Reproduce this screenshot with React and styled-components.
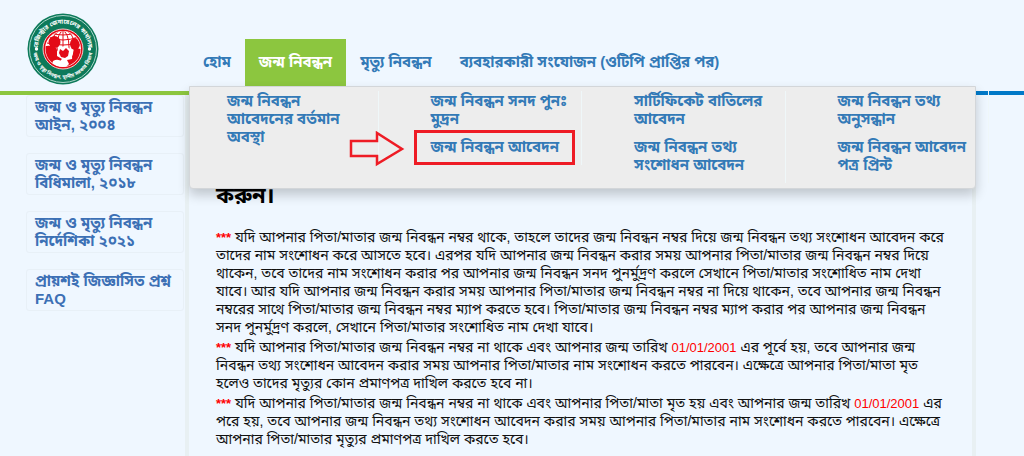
import React from 'react';
import styled, { createGlobalStyle } from 'styled-components'

const GlobalStyle = createGlobalStyle`
    * {
        box-sizing: border-box;
    }
    body {
        margin: 0;
        background-color: #eff7ff;
        font-family: "Liberation Sans", "Noto Sans Bengali", "Noto Sans", sans-serif;
        font-size: 15px;
        line-height: 18px;
        color: #111;
    }
`

const Header = styled.header`
    display: flex;
    align-items: flex-end;
    padding-right: 48px;
    height: 86px;
`
const LogoLink = styled.a`
    width: 189px;
    flex: none;
    padding: 0 0 1px 27px;
    line-height: 0;
`
const Nav = styled.nav`
    position: relative;
    flex: 1;
    display: flex;
`
const NavLink = styled.a`
    padding: 14px;
    height: 47px;
    font-weight: bold;
    white-space: nowrap;
    text-decoration: none;
    color: ${props => (props.$active ? '#fff' : '#337ab7')};
    background-color: ${props => (props.$active ? '#8cc63f' : 'transparent')};
`

const MegaMenu = styled.div`
    position: absolute;
    z-index: 2;
    top: 100%;
    left: 0;
    right: 0;
    padding: 4px 0 5px 37px;
    border: 1px solid #d3d6d9;
    border-radius: 0 0 4px 4px;
    background-color: #ededed;
    box-shadow: 0 6px 12px rgba(0, 0, 0, 0.2);
`
const MenuGrid = styled.div`
    display: grid;
    grid-template-columns: repeat(4, 1fr);
    column-gap: 52px;
    align-items: start;
    margin-right: -14px;
`
const MenuColumn = styled.ul`
    list-style: none;
    margin: 0;
    padding: 0;
    border-right: 1px solid #eff7f9;
`
const MenuItem = styled.li`
    position: relative;
    padding: 1px 0 9px;
`
const MenuLink = styled.a`
    display: block;
    padding-right: 12px;
    font-weight: bold;
    text-decoration: none;
    color: #337ab7;
`
const Highlight = styled.span`
    position: absolute;
    top: -7px;
    left: -17px;
    width: 161px;
    height: 35px;
    border: 3px solid #ee1c25;
    pointer-events: none;
`
const Arrow = styled.svg`
    position: absolute;
    top: -6px;
    left: -82px;
`

const Stripe = styled.div`
    height: 4px;
    background: linear-gradient(to right, #8cc63f 50%, #0079c8 50%);
    margin-top: 5px;
`

const Body = styled.div`
    display: flex;
    padding-right: 48px;
`
const Sidebar = styled.aside`
    flex: none;
    width: 185px;
    padding: 0 1px 0 26px;
    display: flex;
    flex-direction: column;
    gap: 16px;
`
const SideCard = styled.a`
    height: 42px;
    padding: 2px 8px;
    border: 1px solid #e8f0f7;
    border-radius: 3px;
    font-weight: bold;
    text-decoration: none;
    color: #3c70b5;
`
const Content = styled.main`
    flex: 1;
    padding: 89px 24px 8px 27px;
    border: 4px solid #e8f0f3;
    border-width: 0 4px;
    font-size: 14px;
`
const Title = styled.h2`
    margin: 0 0 20px;
    font-size: 22px;
    line-height: 24px;
    color: #000;
`
const Note = styled.p`
    margin: 0 0 2px;
`
const Red = styled.span`
    font-size: 13px;
    line-height: 13px;
    font-weight: ${props => (props.$bold ? 'bold' : 'normal')};
    color: #f00;
`

const navItems = [
  { label: 'হোম' },
  { label: 'জন্ম নিবন্ধন', active: true },
  { label: 'মৃত্যু নিবন্ধন' },
  { label: 'ব্যবহারকারী সংযোজন (ওটিপি প্রাপ্তির পর)' },
]

const menuColumns = [
  [{ label: 'জন্ম নিবন্ধন আবেদনের বর্তমান অবস্থা' }],
  [{ label: 'জন্ম নিবন্ধন সনদ পুনঃ মুদ্রন' }, { label: 'জন্ম নিবন্ধন আবেদন', marked: true }],
  [{ label: 'সার্টিফিকেট বাতিলের আবেদন' }, { label: 'জন্ম নিবন্ধন তথ্য সংশোধন আবেদন' }],
  [{ label: 'জন্ম নিবন্ধন তথ্য অনুসন্ধান' }, { label: 'জন্ম নিবন্ধন আবেদন পত্র প্রিন্ট' }],
]

const sideLinks = [
  'জন্ম ও মৃত্যু নিবন্ধন আইন, ২০০৪',
  'জন্ম ও মৃত্যু নিবন্ধন বিধিমালা, ২০১৮',
  'জন্ম ও মৃত্যু নিবন্ধন নির্দেশিকা ২০২১',
  'প্রায়শই জিজ্ঞাসিত প্রশ্ন FAQ',
]

const Logo = () => (
  <svg width="72" height="72" viewBox="0 0 72 72" role="img" aria-label="রেজিস্ট্রার জেনারেলের কার্যালয়">
    <defs>
      <path id="arcTop" d="M12 44a25.300 25.300 0 1 1 48 0" />
      <path id="arcBottom" d="M7.500 28a29.600 29.600 0 1 0 57 0" />
      <clipPath id="disc"><circle cx="36" cy="36" r="17.500" /></clipPath>
    </defs>
    <circle cx="36" cy="36" r="35.500" fill="#0d7a5a" />
    <circle cx="36" cy="36" r="33.500" fill="none" stroke="#a9d3c6" strokeWidth="1" />
    <circle cx="36" cy="36" r="20" fill="#e30b17" stroke="#f3c9c9" strokeWidth="1" />
    <circle cx="36" cy="36" r="18" fill="#fff" />
    <g clipPath="url(#disc)">
      <g fill="none" stroke="#e30b17" strokeWidth="1">
        <path d="M36 17v18M21 24q15 6 30 0M24 20q12 4 24 0M20 30q16 4 32 0" />
        <ellipse cx="36" cy="34" rx="6" ry="16" />
        <ellipse cx="36" cy="34" rx="12" ry="17" />
      </g>
      <path d="M33 34l6-1 4 3 2 6v14H25l4-16z" fill="#fff" />
      <ellipse cx="27.500" cy="29" rx="6" ry="6" fill="#e30b17" />
      <path d="M16 34q4-2 8-1 5 0 6 4l0 6 5 3-3 3-6-1-1 4 3 4-11-3z" fill="#e30b17" />
      <ellipse cx="48" cy="31" rx="5" ry="6" fill="#e30b17" />
      <path d="M47 35l8 1v14l-8 5-8-1 3-3-2-4 5-1z" fill="#e30b17" />
      <path d="M33 36l3 2 3-3 3 3-1 5-3 2-4-1-2-4z" fill="#e30b17" />
      <path d="M26 48q5-3 9 1l6 1-3 5-10-1z" fill="#fff" />
    </g>
    <circle cx="9.500" cy="36" r="1.700" fill="#fff" />
    <circle cx="62.500" cy="36" r="1.700" fill="#fff" />
    <text fontSize="6" fontWeight="bold" fill="#fff" textAnchor="middle">
      <textPath href="#arcTop" startOffset="50%">রেজিস্ট্রার জেনারেলের কার্যালয়</textPath>
    </text>
    <text fontSize="5" fontWeight="bold" fill="#fff" textAnchor="middle">
      <textPath href="#arcBottom" startOffset="50%">জন্ম ও মৃত্যু নিবন্ধন, স্থানীয় সরকার বিভাগ</textPath>
    </text>
  </svg>
)

const App = () => {
  return (
    <>
      <GlobalStyle />
      <Header>
        <LogoLink href="#"><Logo /></LogoLink>
        <Nav>
          {navItems.map(item => (
            <NavLink key={item.label} href="#" $active={item.active}>{item.label}</NavLink>
          ))}
          <MegaMenu>
            <MenuGrid>
              {menuColumns.map((column, i) => (
                <MenuColumn key={i}>
                  {column.map(item => (
                    <MenuItem key={item.label}>
                      <MenuLink href="#">{item.label}</MenuLink>
                      {item.marked && <Highlight />}
                      {item.marked && (
                        <Arrow width="56" height="36" viewBox="0 0 56 36">
                          <path d="M2 10h26V2l25 16-25 15v-8H2z" fill="none" stroke="#ee1c25" strokeWidth="2.500" />
                        </Arrow>
                      )}
                    </MenuItem>
                  ))}
                </MenuColumn>
              ))}
            </MenuGrid>
          </MegaMenu>
        </Nav>
      </Header>
      <Stripe />
      <Body>
        <Sidebar>
          {sideLinks.map(label => <SideCard key={label} href="#">{label}</SideCard>)}
        </Sidebar>
        <Content>
          <Title>করুন।</Title>
          <Note>
            <Red $bold>***</Red> যদি আপনার পিতা/মাতার জন্ম নিবন্ধন নম্বর থাকে, তাহলে তাদের জন্ম নিবন্ধন নম্বর দিয়ে জন্ম নিবন্ধন তথ্য সংশোধন আবেদন করে
            তাদের নাম সংশোধন করে আসতে হবে। এরপর যদি আপনার জন্ম নিবন্ধন করার সময় আপনার পিতা/মাতার জন্ম নিবন্ধন নম্বর দিয়ে
            থাকেন, তবে তাদের নাম সংশোধন করার পর আপনার জন্ম নিবন্ধন সনদ পুনর্মুদ্রণ করলে সেখানে পিতা/মাতার সংশোধিত নাম দেখা
            যাবে। আর যদি আপনার জন্ম নিবন্ধন করার সময় আপনার পিতা/মাতার জন্ম নিবন্ধন নম্বর না দিয়ে থাকেন, তবে আপনার জন্ম নিবন্ধন
            নম্বরের সাথে পিতা/মাতার জন্ম নিবন্ধন নম্বর ম্যাপ করতে হবে। পিতা/মাতার জন্ম নিবন্ধন নম্বর ম্যাপ করার পর আপনার জন্ম নিবন্ধন
            সনদ পুনর্মুদ্রণ করলে, সেখানে পিতা/মাতার সংশোধিত নাম দেখা যাবে।
          </Note>
          <Note>
            <Red $bold>***</Red> যদি আপনার পিতা/মাতার জন্ম নিবন্ধন নম্বর না থাকে এবং আপনার জন্ম তারিখ <Red>01/01/2001</Red> এর পূর্বে হয়, তবে আপনার জন্ম
            নিবন্ধন তথ্য সংশোধন আবেদন করার সময় আপনার পিতা/মাতার নাম সংশোধন করতে পারবেন। এক্ষেত্রে আপনার পিতা/মাতা মৃত
            হলেও তাদের মৃত্যুর কোন প্রমাণপত্র দাখিল করতে হবে না।
          </Note>
          <Note>
            <Red $bold>***</Red> যদি আপনার পিতা/মাতার জন্ম নিবন্ধন নম্বর না থাকে এবং আপনার পিতা/মাতা মৃত হয় এবং আপনার জন্ম তারিখ <Red>01/01/2001</Red> এর
            পরে হয়, তবে আপনার জন্ম নিবন্ধন তথ্য সংশোধন আবেদন করার সময় আপনার পিতা/মাতার নাম সংশোধন করতে পারবেন। এক্ষেত্রে
            আপনার পিতা/মাতার মৃত্যুর প্রমাণপত্র দাখিল করতে হবে।
          </Note>
        </Content>
      </Body>
    </>
  )
}

export default App;
